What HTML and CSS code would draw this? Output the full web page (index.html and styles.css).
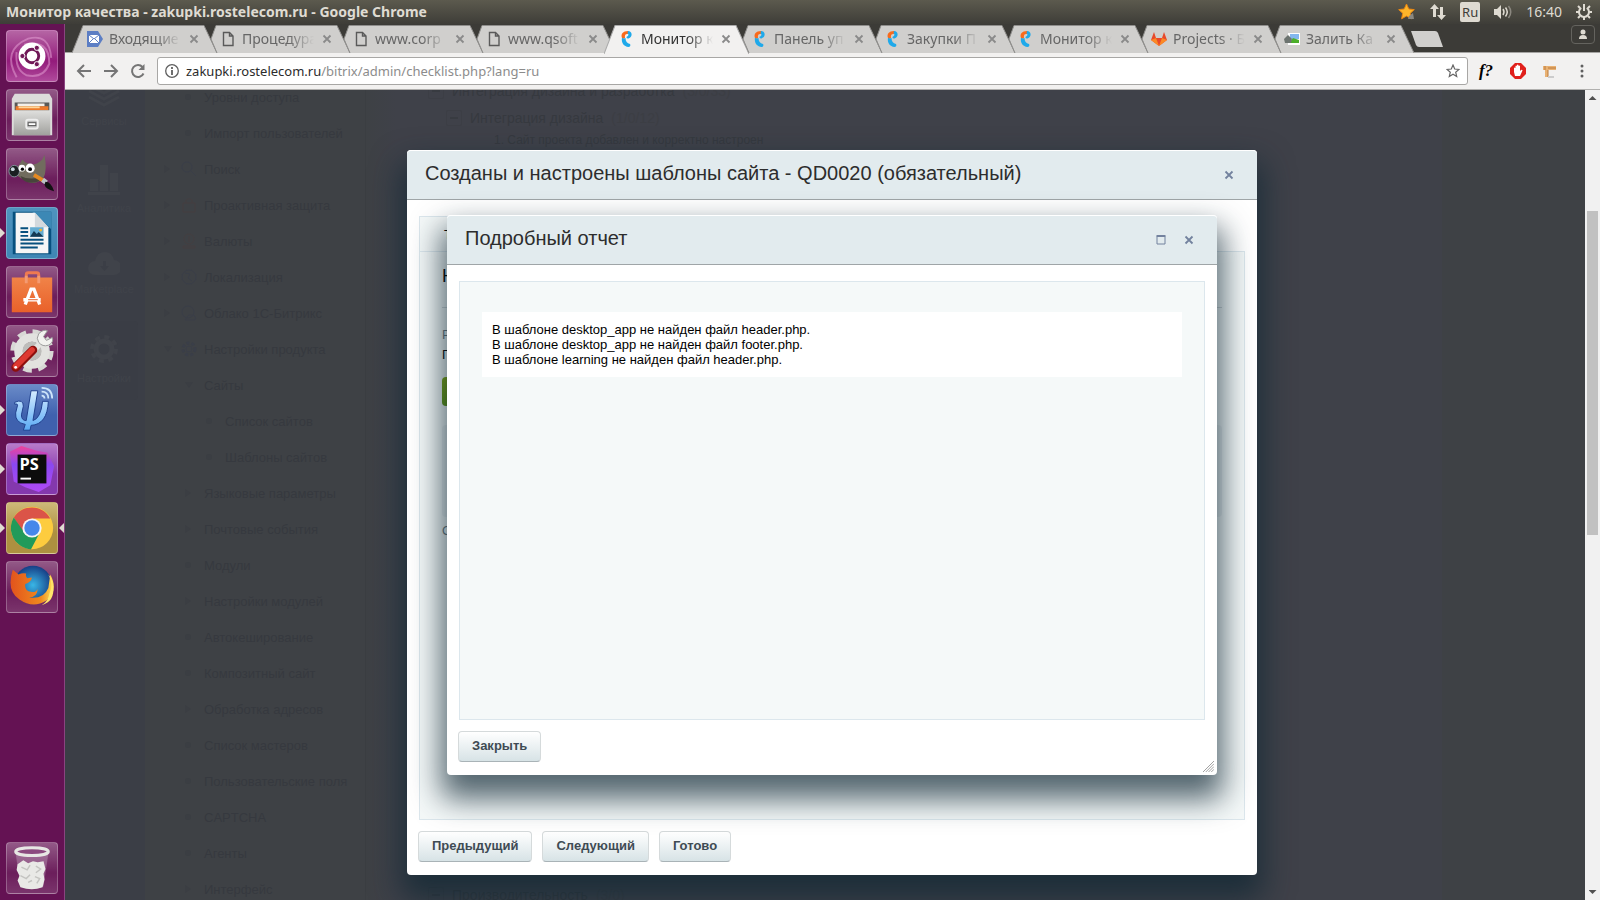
FILE: index.html
```html
<!DOCTYPE html>
<html lang="ru">
<head>
    <meta charset="UTF-8">
    <meta name="viewport" content="width=device-width, initial-scale=1.0">
    <title>Монитор качества - zakupki.rostelecom.ru</title>
    <link rel="stylesheet" href="styles.css">
</head>
<body>
    <!-- shared shapes -->
    <svg class="defs" width="0" height="0" aria-hidden="true">
        <symbol id="tab-full" viewBox="0 0 145 28" preserveAspectRatio="none"><path d="M0 28L11 .5H132L145 28"/></symbol>
        <symbol id="tab-half" viewBox="0 0 145 28" preserveAspectRatio="none"><path d="M12 28L6 14L11 .5H132L145 28"/></symbol>
        <symbol id="doc" viewBox="0 0 16 16"><path d="M3.5 1.5h6l3.500 3.500v9.500h-9.500zM9.500 1.500v3.500h3.500" fill="none" stroke="#5a5a5a" stroke-width="1.400"/></symbol>
        <symbol id="rt" viewBox="0 0 16 16"><path d="M3 7C1.500 3 4 0 9 0c1 .5 1 2 0 3C6.500 2.500 5.500 4 6 7 5 8 3.500 8 3 7z" fill="#f96a1b"/><path d="M9 0c4.500 0 5 6 .5 7.500C7.500 8 7 6 8 5.500 9.500 5 10 3 8.500 2.500zM3 6.500q1.500 1.500 3.500.5C6.500 10 8 12.500 11 13c1 1.500 0 3-1.500 3C5 15.500 2 12 3 6.500z" fill="#1fa9ea"/></symbol>
        <symbol id="x" viewBox="0 0 10 10"><path d="M1.500 1.500l7 7M8.500 1.500l-7 7" fill="none" stroke="currentColor" stroke-width="1.800"/></symbol>
        <linearGradient id="steel" x1="0" y1="0" x2="0" y2="1"><stop offset="0" stop-color="#e0e0de"/><stop offset="1" stop-color="#a0a09d"/></linearGradient>
        <linearGradient id="bag" x1="0" y1="0" x2="0" y2="1"><stop offset="0" stop-color="#f08348"/><stop offset="1" stop-color="#e9612a"/></linearGradient>
        <linearGradient id="psi" x1="0" y1="0" x2="0" y2="1"><stop offset="0" stop-color="#d5ecff"/><stop offset="1" stop-color="#5aaaf5"/></linearGradient>
        <linearGradient id="storm" x1="0" y1="0" x2="0" y2="1"><stop offset="0" stop-color="#f0439a"/><stop offset=".4" stop-color="#8a48f0"/><stop offset="1" stop-color="#b04af5"/></linearGradient>
        <radialGradient id="globe"><stop offset="0" stop-color="#39b6e6"/><stop offset="1" stop-color="#173f86"/></radialGradient>
        <linearGradient id="fox" x1="0" y1="0" x2="1" y2="0"><stop offset="0" stop-color="#e2531d"/><stop offset=".7" stop-color="#f08a1e"/><stop offset="1" stop-color="#ffe45c"/></linearGradient>
    </svg>

    <header class="panel">
        <span class="panel-title">Монитор качества - zakupki.rostelecom.ru - Google Chrome</span>
        <div class="indicators">
            <svg width="18" height="18" viewBox="0 0 18 18"><path d="M8.500 1l2.300 5 5.500.6-4 3.700 1.100 5.500-4.900-2.800-4.900 2.800 1.100-5.500-4-3.700 5.500-.6z" fill="#fdb52a" stroke="#e98612"/><path d="M11 13l4-3 1 6h-6z" fill="#8b8880"/></svg>
            <svg width="18" height="18" viewBox="0 0 18 18"><path d="M5.500 1L10 6H7v8H4V6H1zM12.500 17L8 12h3V4h3v8h3z" fill="#dfdbd2"/></svg>
            <span class="layout">Ru</span>
            <svg width="20" height="16" viewBox="0 0 20 16"><path d="M1 5h3l4-4v14l-4-4H1z" fill="#dfdbd2"/><path d="M10 5q2 3 0 6M12.500 3.500q3.500 4.500 0 9" fill="none" stroke="#dfdbd2" stroke-width="1.500"/><path d="M15.500 2q4.500 6 0 12" fill="none" stroke="#8b8880" stroke-width="1.500"/></svg>
            <time>16:40</time>
            <svg width="18" height="18" viewBox="0 0 18 18"><path d="M6.200 4.800a5 5 0 1 0 5.600 0M9 1v7" fill="none" stroke="#dfdbd2" stroke-width="2"/><path d="M3 3l2 2M15 3l-2 2M1 9h3M14 9h3M3 15l2-2M15 15l-2-2M9 14v3" stroke="#dfdbd2" stroke-width="2"/></svg>
        </div>
    </header>

    <div class="desktop">
        <nav class="launcher" aria-label="Launcher">
            <button class="tile tile-dash" aria-label="Ubuntu"><svg viewBox="0 0 52 52"><path d="M10 48Q-6 20 22 8Q44 2 46 28M18 14Q44 8 44 34Q38 50 20 46Q8 40 10 22" fill="none" stroke="#e8a5d8" stroke-opacity=".5" stroke-width="2"/><circle cx="26" cy="26" r="14" fill="#fff"/><circle cx="26" cy="26" r="7" fill="none" stroke="#701857" stroke-width="3"/><g fill="#701857" stroke="#fff"><circle cx="16" cy="26" r="2.700"/><circle cx="31" cy="17.500" r="2.700"/><circle cx="31" cy="34.500" r="2.700"/></g></svg></button>
            <button class="tile" aria-label="Files"><svg viewBox="0 0 52 52"><path d="M8 4h36l3 5v38H5V9z" fill="#dcdcda"/><path d="M8 13h36v12H8z" fill="#595957"/><path d="M11 14h28v3H11z" fill="#f4efe8"/><path d="M9 17h34v4H9z" fill="#ec7a2a"/><path d="M12 17h22v2H12z" fill="#ffd79a"/><path d="M7 21h38v26H7z" fill="url(#steel)"/><rect x="20" y="31" width="12" height="9" rx="2" fill="#bbb" stroke="#eee" stroke-width="2"/><rect x="22" y="34" width="8" height="3" fill="#fff" stroke="#555"/></svg></button>
            <button class="tile" aria-label="GIMP"><svg viewBox="0 0 52 52"><path d="M11 19l5-8q4 5 11 5 9-1 12-10 3 16-1 24-7 8-17 4l-10-6z" fill="#716c5e"/><path d="M14 28q9 5 23 1-4 7-13 6-8-1-10-7z" fill="#47443b"/><ellipse cx="7.500" cy="23" rx="5.500" ry="6" fill="#1a1f22" stroke="#82919a"/><circle cx="6" cy="21" r="2" fill="#c9d8e0"/><circle cx="15.500" cy="20" r="3.500" fill="#fff"/><circle cx="24" cy="20" r="4.800" fill="#fff"/><circle cx="16" cy="21" r="1.700"/><circle cx="24" cy="21" r="2"/><path d="M28 27l10 6" stroke="#e48a21" stroke-width="4"/><path d="M37 32l4 3" stroke="#bcc3c6" stroke-width="5"/><path d="M40 34q6 0 9 10-9-2-10-7z" fill="#121212"/></svg></button>
            <button class="tile tile-writer running" aria-label="Writer"><svg viewBox="0 0 52 52"><path d="M6 4h40v44H6z" fill="#07507e"/><path d="M26 4h20v18z" fill="#3c88b5"/><path d="M9 5h20l14 15v27H9z" fill="#f6f6f6"/><path d="M29 5v15h14z" fill="#d3d9dd"/><path d="M14 21h8M14 25h8M14 29h8M14 33h24M14 37h24M14 41h18" stroke="#07507e" stroke-width="2"/><rect x="24" y="20" width="14" height="10" fill="#65acd1"/><path d="M24 30l4-6 3 3 2-2 5 5z" fill="#153a53"/><circle cx="35" cy="23" r="1.500" fill="#f5b32b"/></svg></button>
            <button class="tile" aria-label="Ubuntu Software"><svg viewBox="0 0 52 52"><path d="M20 18V8q0-2 2-2h9q2 0 2 2v10" fill="none" stroke="#ef7a50" stroke-width="3"/><path d="M5 11h42v36H5z" fill="url(#bag)"/><path d="M20 17V9M33 17V9" stroke="#f49a72" stroke-width="3"/><path d="M19 39l6-16h3l6 16M17 34h18" fill="none" stroke="#fff" stroke-width="3.500"/><path d="M22 34h10" stroke="#e8632c"/></svg></button>
            <button class="tile" aria-label="Settings"><svg viewBox="0 0 52 52"><circle cx="26" cy="26" r="19" fill="none" stroke="#d8d8d5" stroke-width="7" stroke-dasharray="8.500 6.420"/><circle cx="26" cy="26" r="14" fill="none" stroke="#e2e2df" stroke-width="9"/><circle cx="26" cy="26" r="10" fill="#bdbdba"/><path d="M27 26l9-9" stroke="#e3e3e0" stroke-width="6"/><path d="M33 8q5-5 9-3l-4 6 3 4 6-3q2 5-4 8-6 2-10-3-3-4 0-9z" fill="#f2f2ef" stroke="#999"/><path d="M9 43L27 25" stroke="#8d100d" stroke-width="9" stroke-linecap="round"/><path d="M9 42L26 25" stroke="#dd3931" stroke-width="6" stroke-linecap="round"/><circle cx="9" cy="43" r="1.500" fill="#fff"/></svg></button>
            <button class="tile tile-psi running" aria-label="Psi"><svg viewBox="0 0 52 52"><path d="M8 18q9-4 9 4l-2 9q0 6 5 6l5-31h7l-5 31q8-2 10-20h6q-1 24-18 25l-1 5H17l2-6Q8 39 9 29l2-8q0-2-3-1z" fill="url(#psi)" stroke="#1f3f8c"/><path d="M36 11q3 0 3 3M36 7q7 0 7 7M36 3q11 0 11 11" fill="none" stroke="#cfe6fb" stroke-width="1.800"/></svg></button>
            <button class="tile tile-storm running" aria-label="PhpStorm"><svg viewBox="0 0 52 52"><path d="M3 8l12-6 16 5 11 2 7 14-4 20-12 7-14-5-12-6z" fill="url(#storm)"/><path d="M11 11h30v30H11z" fill="#0c0c0c"/><path d="M14 36h11" stroke="#fff" stroke-width="2"/><text class="storm-text" x="13" y="27">PS</text></svg></button>
            <button class="tile tile-chrome running focused" aria-label="Chrome"><svg viewBox="0 0 52 52"><circle cx="26" cy="26" r="22" fill="#fdcc3e"/><path d="M7 15a22 22 0 0 1 38 1H26L16 30z" fill="#db5448"/><path d="M7 15a22 22 0 0 0 18 33l9-17-17-2z" fill="#219a5a"/><circle cx="26" cy="26" r="10" fill="#f5f5f5"/><circle cx="26" cy="26" r="8" fill="#4687ea"/></svg></button>
            <button class="tile" aria-label="Firefox"><svg viewBox="0 0 52 52"><circle cx="27" cy="24" r="20" fill="url(#globe)"/><path d="M6 8l6 5q4-2 8-1-1 3 1 5l5-1q-1 5-7 7-1 7 6 8 5 1 7-3-1 9-9 9 15 2 20-10l2-14q9 17-4 27-14 9-28-1Q-1 30 6 8z" fill="url(#fox)"/><path d="M43 13q6 11 1 20-1 8-8 12 14-4 12-20-1-8-5-12z" fill="#ffe66b"/></svg></button>
            <button class="tile tile-trash" aria-label="Trash"><svg viewBox="0 0 52 52"><path d="M9 11h34l-5 34q-12 5-24 0z" fill="#dcc9da" opacity=".3"/><path d="M11 22l6-4 5 3 5-2 5 1 6-1 2 8-2 5 1 6-2 8q-11 4-23 0l-3-7 2-5-3-6z" fill="#e9e9e6"/><path d="M15 25l6 3 3-5M30 24l5 3-5 4M14 34l6 3 4-4M29 35l5 2-3 5M22 41l4-2" fill="none" stroke="#c4c4c1" stroke-width="1.500"/><ellipse cx="26" cy="9" rx="17" ry="4" fill="#8b4a7f" stroke="#e7e7e4" stroke-width="3"/></svg></button>
        </nav>

        <div class="browser">
            <div class="tabs">
                <div class="tab"><svg class="tab-shape"><use href="#tab-full"/></svg><svg class="favicon" viewBox="0 0 16 16"><path d="M0 0h11l5 8-5 8H0z" fill="#5c7ec4"/><path d="M2 4h10v8H2z" fill="#fff"/><path d="M2 4l5 4 5-4M2 12l4-4M12 12L8 8" fill="none" stroke="#5c7ec4"/></svg><span class="tab-title">Входящие</span><button class="tab-close" aria-label="Закрыть"><svg><use href="#x"/></svg></button></div>
                <div class="tab"><svg class="tab-shape"><use href="#tab-half"/></svg><svg class="favicon"><use href="#doc"/></svg><span class="tab-title">Процедура</span><button class="tab-close" aria-label="Закрыть"><svg><use href="#x"/></svg></button></div>
                <div class="tab"><svg class="tab-shape"><use href="#tab-half"/></svg><svg class="favicon"><use href="#doc"/></svg><span class="tab-title">www.corp</span><button class="tab-close" aria-label="Закрыть"><svg><use href="#x"/></svg></button></div>
                <div class="tab"><svg class="tab-shape"><use href="#tab-half"/></svg><svg class="favicon"><use href="#doc"/></svg><span class="tab-title">www.qsoft</span><button class="tab-close" aria-label="Закрыть"><svg><use href="#x"/></svg></button></div>
                <div class="tab active"><svg class="tab-shape"><use href="#tab-full"/></svg><svg class="favicon"><use href="#rt"/></svg><span class="tab-title">Монитор к</span><button class="tab-close" aria-label="Закрыть"><svg><use href="#x"/></svg></button></div>
                <div class="tab"><svg class="tab-shape"><use href="#tab-half"/></svg><svg class="favicon"><use href="#rt"/></svg><span class="tab-title">Панель уп</span><button class="tab-close" aria-label="Закрыть"><svg><use href="#x"/></svg></button></div>
                <div class="tab"><svg class="tab-shape"><use href="#tab-half"/></svg><svg class="favicon"><use href="#rt"/></svg><span class="tab-title">Закупки П</span><button class="tab-close" aria-label="Закрыть"><svg><use href="#x"/></svg></button></div>
                <div class="tab"><svg class="tab-shape"><use href="#tab-half"/></svg><svg class="favicon"><use href="#rt"/></svg><span class="tab-title">Монитор к</span><button class="tab-close" aria-label="Закрыть"><svg><use href="#x"/></svg></button></div>
                <div class="tab"><svg class="tab-shape"><use href="#tab-half"/></svg><svg class="favicon" viewBox="0 0 16 16"><path d="M0 9L3 1l2 6h6l2-6 3 8-8 6z" fill="#e8492b"/><path d="M0 9l5-2 3 8zM16 9l-5-2-3 8z" fill="#fb8a25"/></svg><span class="tab-title">Projects · Б</span><button class="tab-close" aria-label="Закрыть"><svg><use href="#x"/></svg></button></div>
                <div class="tab"><svg class="tab-shape"><use href="#tab-half"/></svg><svg class="favicon" viewBox="0 0 16 16"><path d="M4 2h12v12H4z" fill="#fff"/><path d="M6 3h9v5H6z" fill="#83b7ee"/><path d="M5 12l4-5 6 2v3z" fill="#4caf2a"/><path d="M0 8l4-4 4 4-1 4H1z" fill="#6d7470"/></svg><span class="tab-title">Залить Ка</span><button class="tab-close" aria-label="Закрыть"><svg><use href="#x"/></svg></button></div>
                <button class="new-tab" aria-label="Новая вкладка"><svg width="34" height="18" viewBox="0 0 34 18"><path d="M1 1h24q2 0 3 2l5 14H9q-2 0-3-2z" fill="#d0cfcd"/></svg></button>
                <button class="profile" aria-label="Профиль"><svg width="10" height="12" viewBox="0 0 10 12"><circle cx="5" cy="3" r="2.500" fill="#dfdbd2"/><path d="M1 10q0-4 4-4t4 4z" fill="#dfdbd2"/></svg></button>
            </div>

            <div class="toolbar">
                <button class="nav-btn" aria-label="Назад"><svg viewBox="0 0 16 16"><path d="M15 8H2M8 2L2 8l6 6"/></svg></button>
                <button class="nav-btn" aria-label="Вперёд"><svg viewBox="0 0 16 16"><path d="M1 8h13M8 2l6 6-6 6"/></svg></button>
                <button class="nav-btn" aria-label="Обновить"><svg viewBox="0 0 16 16"><path d="M13.500 10.500A6 6 0 1 1 12.500 4"/><path d="M14.500 1v6h-6z" class="solid"/></svg></button>
                <div class="omnibox">
                    <svg width="14" height="14" viewBox="0 0 14 14"><circle cx="7" cy="7" r="6.300" fill="none" stroke="#5f5f5f" stroke-width="1.300"/><path d="M7 6v5M7 3v2" stroke="#5f5f5f" stroke-width="1.800"/></svg>
                    <a class="url" href="#"><span class="host">zakupki.rostelecom.ru</span>/bitrix/admin/checklist.php?lang=ru</a>
                    <svg width="14" height="14" viewBox="0 0 14 14"><path d="M7 1l1.700 4 4.300.4-3.300 2.800 1 4.200L7 10.200l-3.700 2.200 1-4.200L1 5.400 5.300 5z" fill="none" stroke="#666" stroke-width="1.200"/></svg>
                </div>
                <div class="extensions">
                    <button class="fontface" aria-label="WhatFont">f?</button>
                    <button aria-label="AdBlock"><svg width="16" height="16" viewBox="0 0 16 16"><path d="M5 0h6l5 5v6l-5 5H5l-5-5V5z" fill="#e0201b"/><path d="M5 13L4 9V5q.8-.8 1.500 0V3q.8-.8 1.500 0V2q.8-.8 1.500 0v1q.8-.8 1.500 0v5q2-2 2.500-.5L10 13z" fill="#fff"/></svg></button>
                    <button aria-label="Расширение"><svg width="16" height="16" viewBox="0 0 16 16"><path d="M1 3h13v4H6v7H3V7H1z" fill="#e9b172"/><path d="M3 3v4M6 7v7M6 5h8" stroke="#b97a3c"/><path d="M6 14h6" stroke="#ccc" stroke-width="2"/></svg></button>
                    <button aria-label="Меню"><svg width="16" height="16" viewBox="0 0 16 16"><g fill="#5f5f5f"><circle cx="8" cy="3" r="1.500"/><circle cx="8" cy="8" r="1.500"/><circle cx="8" cy="13" r="1.500"/></g></svg></button>
                </div>
            </div>

            <main class="viewport">
                <div class="page">
                    <nav class="sections">
                        <a href="#"><svg width="32" height="24" viewBox="0 0 32 24"><path d="M1 1l15 8 15-8M1 7l15 8 15-8M1 13l15 8 15-8" fill="none" stroke="currentColor" stroke-width="3"/></svg>Сервисы</a>
                        <a href="#"><svg width="32" height="30" viewBox="0 0 32 30"><path d="M2 14h8v12H2zM12 0h8v26h-8zM22 8h8v18h-8zM0 27h32v3H0z" fill="currentColor"/></svg>Аналитика</a>
                        <a href="#"><svg width="32" height="24" viewBox="0 0 32 24"><path fill-rule="evenodd" d="M7 23a7 7 0 0 1 0-14q2-9 10-9 7 0 9 8a7 7 0 0 1 0 15zM15 9v5h-3l4.500 5 4.500-5h-3V9z" fill="currentColor"/></svg>Marketplace</a>
                        <a href="#" class="current"><svg width="32" height="32" viewBox="0 0 32 32"><circle cx="16" cy="16" r="12" fill="none" stroke="currentColor" stroke-width="4" stroke-dasharray="5 4.400"/><circle cx="16" cy="16" r="8" fill="none" stroke="currentColor" stroke-width="5"/></svg>Настройки</a>
                    </nav>
                    <ul class="menu">
                        <li class="leaf dot"><a href="#">Уровни доступа</a></li>
                        <li class="leaf dot"><a href="#">Импорт пользователей</a></li>
                        <li class="closed"><svg viewBox="0 0 16 16"><circle cx="6" cy="6" r="5"/><path d="M10 10l5 5"/></svg><a href="#">Поиск</a></li>
                        <li class="closed"><svg class="warm" viewBox="0 0 16 16"><path d="M2 6h12v9H2zM5 6V3q3-3 6 0v3"/></svg><a href="#">Проактивная защита</a></li>
                        <li class="closed"><svg class="warm" viewBox="0 0 16 16"><circle cx="8" cy="6" r="5"/><path d="M2 13h12v2H2zM8 3v6"/></svg><a href="#">Валюты</a></li>
                        <li class="closed"><svg viewBox="0 0 16 16"><circle cx="8" cy="8" r="7"/><path d="M4 4l5 1-2 4 4 3"/></svg><a href="#">Локализация</a></li>
                        <li class="closed"><svg viewBox="0 0 16 16"><circle cx="7" cy="7" r="6"/><path d="M4 15h10q2-4-3-5-4-1-5 2z"/></svg><a href="#">Облако 1С-Битрикс</a></li>
                        <li class="open"><svg viewBox="0 0 16 16"><circle cx="8" cy="8" r="6" stroke-width="3" stroke-dasharray="3 2"/><circle cx="8" cy="8" r="3"/></svg><a href="#">Настройки продукта</a></li>
                        <li class="leaf open"><a href="#">Сайты</a></li>
                        <li class="deep dot"><a href="#">Список сайтов</a></li>
                        <li class="deep dot"><a href="#">Шаблоны сайтов</a></li>
                        <li class="leaf closed"><a href="#">Языковые параметры</a></li>
                        <li class="leaf closed"><a href="#">Почтовые события</a></li>
                        <li class="leaf dot"><a href="#">Модули</a></li>
                        <li class="leaf closed"><a href="#">Настройки модулей</a></li>
                        <li class="leaf dot"><a href="#">Автокеширование</a></li>
                        <li class="leaf dot"><a href="#">Композитный сайт</a></li>
                        <li class="leaf closed"><a href="#">Обработка адресов</a></li>
                        <li class="leaf dot"><a href="#">Список мастеров</a></li>
                        <li class="leaf dot"><a href="#">Пользовательские поля</a></li>
                        <li class="leaf dot"><a href="#">CAPTCHA</a></li>
                        <li class="leaf dot"><a href="#">Агенты</a></li>
                        <li class="leaf closed"><a href="#">Интерфейс</a></li>
                    </ul>
                    <div class="content">
                        <div class="tree">
                            <p class="node"><i class="toggle"></i>Интеграция дизайна и разработка <span class="count">(3/0/33)</span></p>
                            <p class="node child"><i class="toggle"></i>Интеграция дизайна <span class="count">(1/0/12)</span></p>
                            <p class="check">1. Сайт проекта добавлен и корректно настроен</p>
                        </div>
                        <p class="node last"><i class="toggle"></i>Производительность <span class="count">(3/0)</span></p>
                    </div>
                </div>

                <div class="scrollbar"><div class="thumb"></div></div>

                <section class="dialog dialog-test">
                    <header class="dialog-head">
                        <h2>Созданы и настроены шаблоны сайта - QD0020 (обязательный)</h2>
                        <button class="head-btn" aria-label="Закрыть"><svg><use href="#x"/></svg></button>
                    </header>
                    <div class="dialog-body">
                        <div class="test-tab">Тест</div>
                        <div class="well test-well">
                            <h3>Не пройден</h3>
                            <p class="label">Результат</p>
                            <p>Провален</p>
                            <button class="btn-green" aria-label="Запустить"></button>
                            <div class="note"></div>
                            <p class="label">Отчет</p>
                        </div>
                    </div>
                    <footer class="dialog-foot">
                        <button class="btn">Предыдущий</button>
                        <button class="btn">Следующий</button>
                        <button class="btn">Готово</button>
                    </footer>
                </section>

                <section class="dialog dialog-report">
                    <header class="dialog-head">
                        <h2>Подробный отчет</h2>
                        <button class="head-btn" aria-label="Развернуть"><svg viewBox="0 0 10 10"><path d="M1 1.500h8v7.500h-8z" fill="none" stroke="currentColor"/><path d="M.5 1h9" stroke="currentColor" stroke-width="2"/></svg></button>
                        <button class="head-btn" aria-label="Закрыть"><svg><use href="#x"/></svg></button>
                    </header>
                    <div class="dialog-body">
                        <div class="well">
                            <div class="report">
                                В шаблоне desktop_app не найден файл header.php.<br>
                                В шаблоне desktop_app не найден файл footer.php.<br>
                                В шаблоне learning не найден файл header.php.
                            </div>
                        </div>
                    </div>
                    <footer class="dialog-foot">
                        <button class="btn">Закрыть</button>
                    </footer>
                    <svg class="grip" viewBox="0 0 12 12"><path d="M0 12L12 0M3 12l9-9M6 12l6-6M9 12l3-3" stroke="#999" stroke-width="1"/></svg>
                </section>
            </main>
        </div>
    </div>
</body>
</html>
```
FILE: styles.css
```css
* {
    box-sizing: border-box;
}
body {
    margin: 0;
    height: 100vh;
    display: flex;
    flex-direction: column;
    overflow: hidden;
    font-family: "Liberation Sans", Arial, sans-serif;
    font-size: 13px;
}
button {
    margin: 0;
    padding: 0;
    border: none;
    background: none;
    color: inherit;
    font-family: inherit;
}
a {
    color: inherit;
    text-decoration: none;
}
p, h2, h3, ul {
    margin: 0;
    padding: 0;
    font-weight: normal;
}
svg {
    display: block;
    flex: none;
}
.defs {
    position: absolute;
}

/* top panel */
.panel {
    flex: none;
    display: flex;
    align-items: center;
    justify-content: space-between;
    height: 24px;
    padding: 0 7px 1px 6px;
    background: linear-gradient(#5c5a4e, #3e3d38);
    color: #dfdbd2;
    font-family: "Noto Sans", sans-serif;
    font-size: 14px;
}
.panel-title {
    font-weight: bold;
}
.indicators {
    display: flex;
    align-items: center;
    gap: 13px;
}
.layout {
    padding: 0 2px;
    border-radius: 2px;
    background: #dfdbd2;
    color: #3e3d38;
    font-size: 13px;
    line-height: 20px;
}

.desktop {
    flex: 1;
    display: flex;
    min-height: 0;
}

/* launcher */
.launcher {
    flex: none;
    display: flex;
    flex-direction: column;
    gap: 7px;
    width: 65px;
    padding: 6px;
    border-right: 1px solid #8a4480;
    background: #641253;
}
.tile {
    position: relative;
    flex: none;
    width: 52px;
    height: 52px;
    border: 1px solid rgba(255, 255, 255, .25);
    border-radius: 4px;
    background: linear-gradient(rgba(255, 255, 255, .3), rgba(255, 255, 255, .05) 60%, rgba(255, 255, 255, .15));
}
.tile svg {
    width: 50px;
    height: 50px;
}
.tile-dash {
    background: linear-gradient(#b565a4, #931b7b 60%, #b04a9c);
}
.tile-writer {
    background: linear-gradient(#4f93be, #3f86b5);
}
.tile-psi {
    background: linear-gradient(#6a8bc8, #3f61ae 60%);
}
.tile-storm {
    background: linear-gradient(#b87bc9, #8438ad 60%);
}
.tile-chrome {
    background: linear-gradient(#cdb978, #ad9040 60%);
}
.tile-trash {
    margin-top: auto;
}
.running::before,
.focused::after {
    content: "";
    position: absolute;
    top: 20px;
    border: 5px solid transparent;
}
.running::before {
    left: -7px;
    border-left-color: #dfdbd2;
    border-right: none;
}
.focused::after {
    right: -7px;
    border-right-color: #dfdbd2;
    border-left: none;
}
.storm-text {
    fill: #fff;
    font-family: "Open Sans", sans-serif;
    font-size: 17px;
    font-weight: bold;
}

/* browser chrome */
.browser {
    flex: 1;
    display: flex;
    flex-direction: column;
    min-width: 0;
}
.tabs {
    flex: none;
    display: flex;
    height: 29px;
    padding: 1px 5px 0 7px;
    border-bottom: 1px solid #a5a4a2;
    background: #3c3b37;
    font-family: "Noto Sans", sans-serif;
}
.tab {
    position: relative;
    display: flex;
    align-items: center;
    width: 133px;
    height: 28px;
    padding: 0 0 1px 15px;
    color: #666;
    font-size: 14px;
}
.tab-shape {
    position: absolute;
    top: 0;
    left: 0;
    width: 145px;
    height: 28px;
    fill: #d0cfcd;
    stroke: #8f8e8c;
}
.tab.active .tab-shape {
    height: 29px;
    fill: #f2f1f0;
    stroke: #aaa;
}
.tab.active {
    color: #333;
}
.favicon {
    position: relative;
    width: 16px;
    height: 16px;
}
.tab-title {
    position: relative;
    flex: 1;
    margin-left: 6px;
    overflow: hidden;
    white-space: nowrap;
    -webkit-mask-image: linear-gradient(90deg, #000 65%, transparent);
    mask-image: linear-gradient(90deg, #000 65%, transparent);
}
.tab-close {
    position: relative;
    width: 10px;
    height: 10px;
    margin: 0 6px 0 8px;
    color: #8a8a8a;
}
.tab-close svg,
.head-btn svg {
    width: 10px;
    height: 10px;
}
.new-tab {
    align-self: center;
    margin-left: 8px;
}
.profile {
    display: flex;
    align-items: center;
    justify-content: center;
    width: 24px;
    height: 19px;
    margin-left: auto;
    border: 1px solid #64635e;
    border-radius: 4px;
}
.toolbar {
    flex: none;
    display: flex;
    align-items: center;
    height: 37px;
    padding: 0 10px 0 11px;
    border-bottom: 1px solid #b1b0ae;
    background: #f2f1f0;
}
.nav-btn {
    width: 16px;
    height: 16px;
    margin-right: 11px;
}
.nav-btn svg {
    width: 16px;
    height: 16px;
    fill: none;
    stroke: #757575;
    stroke-width: 2;
}
.nav-btn .solid {
    fill: #757575;
    stroke: none;
}
.omnibox {
    flex: 1;
    display: flex;
    align-items: center;
    height: 28px;
    padding: 0 7px;
    margin-right: 10px;
    border: 1px solid #a8a7a5;
    border-radius: 3px;
    background: #fff;
}
.url {
    flex: 1;
    margin-left: 7px;
    color: #8c8c8c;
    font-family: "Noto Sans", sans-serif;
    font-size: 13px;
}
.host {
    color: #2b2b2b;
}
.extensions {
    display: flex;
    align-items: center;
    gap: 16px;
}
.fontface {
    width: 16px;
    color: #000;
    font-family: "Liberation Serif", serif;
    font-size: 17px;
    font-style: italic;
    font-weight: bold;
}

/* page under the overlay */
.viewport {
    position: relative;
    flex: 1;
    display: flex;
    min-height: 0;
    overflow: hidden;
}
.page {
    flex: 1;
    display: flex;
    height: 100%;
    overflow: hidden;
    background: #3e4145;
    color: #36393f;
}
.sections {
    flex: none;
    display: flex;
    flex-direction: column;
    gap: 10px;
    width: 80px;
    padding: 0 7px 0 5px;
    margin-top: -18px;
    background: #3b3e46;
    color: #40434a;
    font-size: 11px;
    line-height: 14px;
}
.sections a {
    display: flex;
    flex-direction: column;
    align-items: center;
    gap: 6px;
    padding: 12px 0 15px;
}
.sections .current {
    border-radius: 4px;
    background: #3a3d45;
}
.menu {
    flex: none;
    width: 221px;
    margin-top: -11px;
    border-right: 1px solid #3b3e42;
    list-style: none;
}
.menu li {
    display: flex;
    align-items: center;
    height: 36px;
    padding-left: 19px;
}
.menu .leaf {
    padding-left: 40px;
}
.menu .deep {
    padding-left: 61px;
}
.menu li::before {
    content: "";
    width: 6px;
    height: 6px;
    margin-right: 13px;
}
.menu .dot::before {
    border-radius: 50%;
    background: #3b3e43;
}
.menu .closed::before {
    height: 8px;
    background: #3b3e43;
    clip-path: polygon(0 0, 100% 50%, 0 100%);
}
.menu .open::before {
    width: 8px;
    margin-right: 11px;
    background: #3b3e43;
    clip-path: polygon(0 0, 100% 0, 50% 100%);
}
.menu svg {
    width: 16px;
    height: 16px;
    margin: 0 7px 0 -2px;
    fill: none;
    stroke: #3a3e48;
}
.menu .warm {
    stroke: #443f41;
}
.content {
    flex: 1;
    display: flex;
    flex-direction: column;
    justify-content: space-between;
    margin-right: 143px;
    padding-left: 62px;
    background: linear-gradient(90deg, #3e4145, #3f4149 30px);
}
.tree {
    margin-top: -13px;
}
.node {
    display: flex;
    align-items: center;
    gap: 8px;
    height: 27px;
    font-size: 14px;
}
.child {
    padding-left: 18px;
}
.count {
    color: #3c3e44;
}
.last {
    height: 10px;
}
.toggle {
    width: 16px;
    height: 16px;
    border: 1px solid #3c3e45;
    border-radius: 2px;
    background: linear-gradient(#383b41, #383b41) center / 8px 2px no-repeat;
}
.check {
    padding-left: 66px;
    font-size: 12px;
    line-height: 18px;
}
.scrollbar {
    flex: none;
    display: flex;
    flex-direction: column;
    width: 15px;
    padding: 0 2px;
    background: #f1f1f1;
}
.scrollbar::before,
.scrollbar::after {
    content: "";
    width: 8px;
    height: 4px;
    margin: 6px auto;
    background: #505050;
    clip-path: polygon(50% 0, 100% 100%, 0 100%);
}
.scrollbar::after {
    margin-top: auto;
    clip-path: polygon(0 0, 100% 0, 50% 100%);
}
.thumb {
    height: 40%;
    margin-top: 105px;
    background: #c1c1c1;
}

/* dialogs */
.dialog {
    position: absolute;
    left: 0;
    right: 1px;
    display: flex;
    flex-direction: column;
    margin: 0 auto;
    border-radius: 4px;
    background: #fff;
    box-shadow: 0 18px 30px 6px rgba(14, 38, 51, .7);
}
.dialog-test {
    top: 60px;
    width: 850px;
}
.dialog-report {
    top: 125px;
    width: 770px;
}
.dialog-head {
    display: flex;
    align-items: center;
    gap: 18px;
    height: 50px;
    padding: 0 23px 0 18px;
    border-top: 1px solid #fff;
    border-bottom: 1px solid #9fa5a7;
    border-radius: 4px 4px 0 0;
    background: #e2ebee;
    color: #73829e;
}
.dialog-head h2 {
    flex: 1;
    padding-bottom: 4px;
    color: #2d2d2d;
    font-size: 20px;
}
.head-btn {
    width: 10px;
    height: 10px;
}
.dialog-body {
    padding: 16px 12px 0;
}
.well {
    height: 439px;
    padding: 30px 22px;
    border: 1px solid #dce7ed;
    background: #f5f9f9;
}
.report {
    padding: 10px;
    background: #fff;
    color: #000;
    line-height: 15px;
}
.test-tab {
    width: 400px;
    height: 35px;
    padding-left: 24px;
    border: 1px solid #dce7ed;
    border-bottom: none;
    background: #f5f9f9;
    line-height: 36px;
}
.test-well {
    height: 569px;
    padding: 14px 22px;
    line-height: 20px;
}
.test-well h3 {
    height: 42px;
    margin-bottom: 17px;
    border-bottom: 1px solid #d0d6d9;
    font-size: 18px;
}
.label {
    color: #6b7880;
}
.btn-green {
    display: block;
    width: 120px;
    height: 29px;
    margin: 12px 0 19px;
    border-radius: 4px;
    background: linear-gradient(#7fa80d, #5f9510);
}
.note {
    height: 92px;
    margin-bottom: 4px;
    border-radius: 4px;
    background: #e9eef0;
}
.dialog-foot {
    display: flex;
    gap: 10px;
    padding: 11px 11px 13px;
}
.btn {
    height: 31px;
    padding: 0 13px 2px;
    border: 1px solid #d5dadb;
    border-bottom-color: #a9b3b7;
    border-radius: 4px;
    background: linear-gradient(#fff, #d7e3e6);
    color: #3f4b54;
    font-size: 13px;
    font-weight: bold;
}
.grip {
    position: absolute;
    right: 3px;
    bottom: 3px;
    width: 11px;
    height: 11px;
}
```
